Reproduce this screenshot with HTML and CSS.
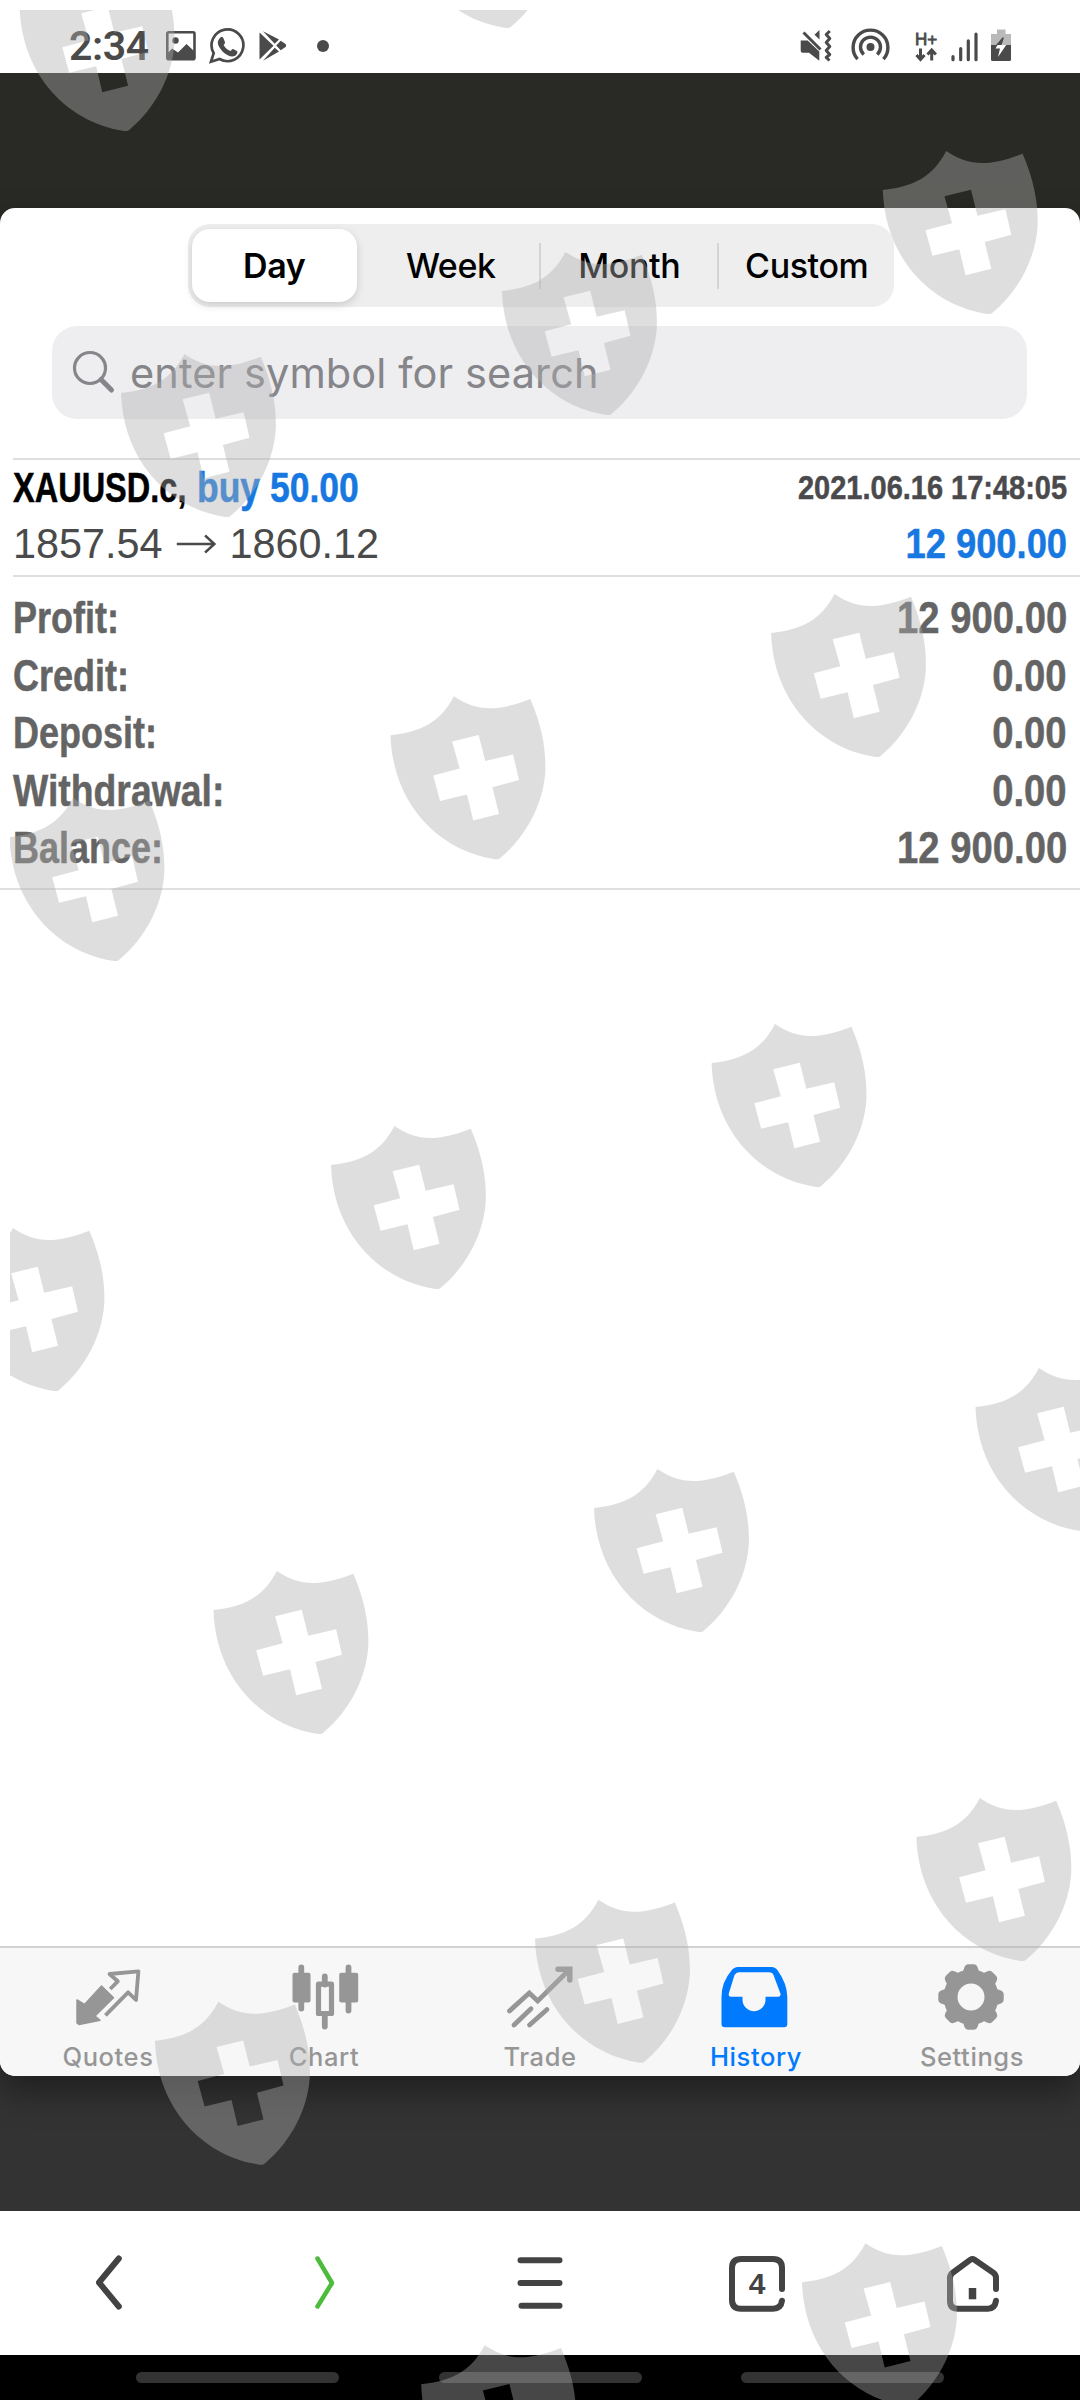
FILE: index.html
```
<!DOCTYPE html>
<html lang="en">
<head>
    <meta charset="UTF-8">
    <meta name="viewport" content="width=device-width, initial-scale=1.0">
    <title>History</title>
    <link rel="stylesheet" href="styles.css">
</head>
<body>
    <div class="screen">
        <header class="status-bar">
            <div class="status-left">
                <span class="clock">2:34</span>
                <svg class="st-image" width="30" height="40" viewBox="0 0 30 40">
                    <rect x="1.3" y="6.3" width="27.2" height="27" rx="1.5" fill="none" stroke="currentColor" stroke-width="2.6"/>
                    <circle cx="9.5" cy="14.5" r="3.2" fill="currentColor"/>
                    <path d="M1 28l5-5.500 6 4 8.500-8.500 8 7.500v8H1z" fill="currentColor"/>
                </svg>
                <svg class="st-whatsapp" width="37" height="40" viewBox="0 0 37 40">
                    <path d="M2 35.700l2.700-8.500A15.900 15.900 0 1 1 10.500 33z" fill="none" stroke="currentColor" stroke-width="2.700"/>
                    <path d="M10.500 12.500c1.500-2 3.400-1.700 4 0l1.500 3.700c.3 1-.9 2-1.400 2.800 1.600 3 3.900 4.800 6.900 6 .8-.8 1.600-2.300 2.600-2l3.800 1.900c1.400 1-.3 4.300-2.300 5.100-3.300 1.200-7.700-.6-11-3.600-3.300-3-6.800-8.500-5.500-11.500.2-.8.700-1.600 1.400-2.400z" fill="currentColor"/>
                </svg>
                <svg class="st-play" width="28" height="40" viewBox="0 0 28 40">
                    <path d="M.5 6.500L14.500 19.800.5 33.500zM4 5.300L20 13.500l-4.300 4.300zM21.700 14.700l4.500 3c1.300 1 1.300 2.600 0 3.600l-4.500 3-4.500-4.700zM4 34.700l11.700-13L20 25.600z" fill="currentColor"/>
                </svg>
                <span class="dot"></span>
            </div>
            <div class="status-right">
                <svg class="st-mute" width="32" height="40" viewBox="0 0 32 40">
                    <path d="M.7 14.500h7l11.600 11v9.300L9 26.700H2.700a2 2 0 0 1-2-2z" fill="currentColor"/>
                    <path d="M3.500 6.500l17 17" stroke="currentColor" stroke-width="3"/>
                    <path d="M19.500 4v9.500l-5-4.700z" fill="currentColor"/>
                    <path d="M29.800 5l-3.600 3.500 3.600 4-3.600 4 3.600 4-3.600 4 3.600 4-3.600 3 3.300 3" fill="none" stroke="currentColor" stroke-width="3" stroke-linejoin="round"/>
                </svg>
                <svg class="st-hotspot" width="39" height="40" viewBox="0 0 39 40">
                    <circle cx="19.500" cy="21" r="4" fill="currentColor"/>
                    <path d="M12.800 28.500a10 10 0 1 1 13.400 0M6.600 33.200a17.400 17.400 0 1 1 25.800 0" fill="none" stroke="currentColor" stroke-width="3.400"/>
                </svg>
                <svg class="st-data" width="23" height="40" viewBox="0 0 23 40">
                    <text class="data-text" x="0" y="18.500">H+</text>
                    <path d="M5.500 22.500v10M1.500 29l4 4.500 4-4.500M16.700 34.500v-10M12.500 28.500l4.200-4.500 4.200 4.500" fill="none" stroke="currentColor" stroke-width="3"/>
                </svg>
                <svg class="st-signal" width="29" height="40" viewBox="0 0 29 40">
                    <path d="M3 30.500v3.200M10.700 22.500v11.200M18.300 14.800v18.900M26 8v25.700" stroke="currentColor" stroke-width="3.200" stroke-linecap="round"/>
                </svg>
                <svg class="st-battery" width="22" height="40" viewBox="0 0 22 40">
                    <path d="M7 3.500h8.500V8H21v11H1V8h6z" fill="#b9b9b9"/>
                    <path d="M1 19h20v14.500a1.500 1.500 0 0 1-1.500 1.500h-17A1.500 1.500 0 0 1 1 33.500z" fill="currentColor"/>
                    <path d="M12.500 11.500l1.500 0-2.500 7.500h-5.500z" fill="currentColor"/>
                    <path d="M11.500 19h4.700L8 31l2-8.500H5.500L7.500 19z" fill="#fff"/>
                </svg>
            </div>
        </header>

        <main class="stage">
            <section class="card">
                <div class="segments">
                    <button class="segment active">Day</button>
                    <button class="segment">Week</button>
                    <button class="segment divided">Month</button>
                    <button class="segment divided">Custom</button>
                </div>

                <div class="search">
                    <svg width="44" height="46" viewBox="0 0 44 46" fill="none" stroke="currentColor">
                        <circle cx="18" cy="18" r="15.500" stroke-width="3.200"/>
                        <path d="M29 29.500L39.500 40" stroke-width="5" stroke-linecap="round"/>
                    </svg>
                    <span class="placeholder">enter symbol for search</span>
                </div>

                <div class="deal">
                    <div class="deal-row">
                        <div class="deal-title"><span class="symbol">XAUUSD.c,</span><span class="side">buy 50.00</span></div>
                        <span class="date">2021.06.16 17:48:05</span>
                    </div>
                    <div class="deal-row">
                        <div class="prices">
                            <span>1857.54</span>
                            <svg width="40" height="20" viewBox="0 0 40 20" fill="none" stroke="currentColor" stroke-width="2.500">
                                <path d="M0 10h38M29 1.500l9.500 8.500-9.500 8.500"/>
                            </svg>
                            <span>1860.12</span>
                        </div>
                        <span class="amount">12 900.00</span>
                    </div>
                </div>

                <div class="summary">
                    <div class="summary-row"><span class="label">Profit:</span><span class="value">12 900.00</span></div>
                    <div class="summary-row"><span class="label">Credit:</span><span class="value">0.00</span></div>
                    <div class="summary-row"><span class="label">Deposit:</span><span class="value">0.00</span></div>
                    <div class="summary-row"><span class="label wide">Withdrawal:</span><span class="value">0.00</span></div>
                    <div class="summary-row"><span class="label">Balance:</span><span class="value">12 900.00</span></div>
                </div>

                <nav class="tabs">
                    <div class="tab">
                        <svg width="72" height="76" viewBox="0 0 72 76">
                            <path d="M5 38l7.500 4.500 17-18.500 12 11.700L23 54l5 4.300L7 62.500l-2-1.500z" fill="currentColor" stroke="currentColor" stroke-width="1.500" stroke-linejoin="round"/>
                            <path d="M38.200 27l7.600-7.700L37.500 12l28.900-2.700L64 38l-7.900-7.700-22.700 23" fill="none" stroke="currentColor" stroke-width="3.800" stroke-linejoin="round"/>
                        </svg>
                        <span>Quotes</span>
                    </div>
                    <div class="tab">
                        <svg width="72" height="76" viewBox="0 0 72 76">
                            <path d="M13.300 5.500v41M36.800 14.500v8M36.800 52v12.500M60.500 5.500v43" stroke="currentColor" stroke-width="5.800" stroke-linecap="round"/>
                            <rect x="4.500" y="10.700" width="18" height="29.800" rx="2" fill="currentColor"/>
                            <rect x="51.200" y="10.700" width="19" height="29.800" rx="2" fill="currentColor"/>
                            <rect x="30.500" y="22.200" width="13" height="29.300" fill="none" stroke="currentColor" stroke-width="5.200" stroke-linejoin="round"/>
                        </svg>
                        <span>Chart</span>
                    </div>
                    <div class="tab">
                        <svg width="72" height="76" viewBox="0 0 72 76" fill="none" stroke="currentColor" stroke-width="4.800">
                            <path d="M5.500 49L25.300 31l8.400 8L65 8" stroke-linecap="round"/>
                            <path d="M54 7.200h11.800V18" stroke-width="5.500" stroke-linecap="round"/>
                            <path d="M10 63l17-16.300M25.500 63l17.500-15.500" stroke-linecap="round"/>
                        </svg>
                        <span>Trade</span>
                    </div>
                    <div class="tab active">
                        <svg width="72" height="76" viewBox="0 0 72 76">
                            <path fill-rule="evenodd" d="M18 5h33.500q4 0 6.200 3.500Q67.300 22 67.300 35v27q0 3.300-3.300 3.300H5q-3.500 0-3.500-3.300V35Q1.500 20 11.500 8.500 14 5 18 5zM19 10.300q-3 0-4.500 2.700L8.800 31.500q-.8 3.200 2.200 3.200h11.500v3a11.500 11.500 0 0 0 23 0v-3H58q3.300 0 2.400-3.200L53.500 13q-1-2.700-4.500-2.700z" fill="currentColor"/>
                        </svg>
                        <span>History</span>
                    </div>
                    <div class="tab">
                        <svg width="72" height="76" viewBox="0 0 72 76" fill="currentColor">
                            <defs>
                                <path id="tooth" d="M22 13q4.500-2 5.500-5l1-3q1-2.700 3.500-2.700h6q2.500 0 3.500 2.700l1 3q1 3 5.500 5z"/>
                            </defs>
                            <circle cx="35" cy="35" r="20.500" fill="none" stroke="currentColor" stroke-width="14"/>
                            <use href="#tooth"/>
                            <use href="#tooth" transform="rotate(45 35 35)"/>
                            <use href="#tooth" transform="rotate(90 35 35)"/>
                            <use href="#tooth" transform="rotate(135 35 35)"/>
                            <use href="#tooth" transform="rotate(180 35 35)"/>
                            <use href="#tooth" transform="rotate(225 35 35)"/>
                            <use href="#tooth" transform="rotate(270 35 35)"/>
                            <use href="#tooth" transform="rotate(315 35 35)"/>
                        </svg>
                        <span>Settings</span>
                    </div>
                </nav>
            </section>
        </main>

        <nav class="browser-bar">
            <svg width="72" height="72" viewBox="0 0 72 72"><path d="M46.800 11.500L27 35.500l19.800 24"/></svg>
            <svg class="forward" width="72" height="72" viewBox="0 0 72 72"><path d="M29.500 11.500L44 36 29.500 59.500"/></svg>
            <svg width="72" height="72" viewBox="0 0 72 72"><path d="M16.500 13.300h39M16.500 36h39M17.500 58.700h38"/></svg>
            <svg width="72" height="72" viewBox="0 0 72 72">
                <path d="M62 42V21q0-9-9-9H21q-9 0-9 9v31.700q0 9 9 9h32q8 0 9-8"/>
                <text class="count" x="37" y="46.500">4</text>
            </svg>
            <svg width="72" height="72" viewBox="0 0 72 72">
                <path d="M60 42V31q0-3.500-3-5.500L38.500 12.700q-2-1.300-4 0L17 25.500q-3 2-3 5.500v22.700q0 8 8 8h30q7 0 8-8"/>
                <path class="door" d="M36.500 41v11.300"/>
            </svg>
        </nav>

        <footer class="system-bar">
            <span></span>
            <span></span>
            <span></span>
        </footer>

        <svg class="watermark" width="1070" height="2390" viewBox="10 10 1070 2390">
            <defs>
                <path id="shield" fill-rule="evenodd" d="M0 0C30-3 50-13 63.400-39 85-25 103-22 139.800-36.300 152-8 155.500 15 154.800 36 153 68 136 101 110 122.500 108 124.500 106 124 103 123.700 48 115 2 68 0 0zM61.600 6.300l7.600 27-26.500 7 6.900 25.400 26.900-6.400 6.200 26 25.800-6.600-6.600-26.700 26.600-7.300-5.900-25.400-27.900 6.400-6.500-26z"/>
            </defs>
            <use href="#shield" x="19.600" y="7"/>
            <use href="#shield" x="401.200" y="-96"/>
            <use href="#shield" x="882.800" y="190"/>
            <use href="#shield" x="502" y="291"/>
            <use href="#shield" x="121" y="393"/>
            <use href="#shield" x="771.100" y="633"/>
            <use href="#shield" x="390.500" y="735.300"/>
            <use href="#shield" x="9.500" y="837"/>
            <use href="#shield" x="711.600" y="1063"/>
            <use href="#shield" x="331" y="1165"/>
            <use href="#shield" x="-50.500" y="1267"/>
            <use href="#shield" x="975.500" y="1407"/>
            <use href="#shield" x="594" y="1508"/>
            <use href="#shield" x="213.500" y="1610"/>
            <use href="#shield" x="916.400" y="1837"/>
            <use href="#shield" x="535" y="1938.700"/>
            <use href="#shield" x="155" y="2040.700"/>
            <use href="#shield" x="802" y="2282.300"/>
            <use href="#shield" x="421.200" y="2384.300"/>
        </svg>
    </div>
</body>
</html>
```
FILE: styles.css
```
* {
    box-sizing: border-box;
}
body {
    margin: 0;
    background: #fff;
    font-family: Inter, "Liberation Sans", sans-serif;
}
svg {
    display: block;
    flex: none;
}
.screen {
    position: relative;
    width: 1080px;
    height: 2400px;
    display: flex;
    flex-direction: column;
    overflow: hidden;
}

/* status bar */
.status-bar {
    height: 73px;
    padding: 19px 68px 0 69px;
    display: flex;
    justify-content: space-between;
    color: #4a4a4a;
}
.status-left,
.status-right {
    height: 54px;
    display: flex;
    align-items: center;
}
.clock {
    width: 97px;
    font-family: Roboto, sans-serif;
    font-size: 41px;
    font-weight: 600;
    letter-spacing: -0.4px;
    line-height: 54px;
}
.st-whatsapp,
.st-play {
    margin-left: 13px;
}
.dot {
    width: 12px;
    height: 12px;
    margin-left: 30px;
    border-radius: 50%;
    background: currentColor;
}
.st-hotspot {
    margin-left: 19px;
}
.st-data {
    margin-left: 25px;
}
.st-signal {
    margin-left: 12px;
}
.st-battery {
    margin-left: 11px;
}
.data-text {
    font: 500 17px "Liberation Sans", sans-serif;
    fill: #4a4a4a;
    stroke: #4a4a4a;
    stroke-width: 0.8px;
}

/* dark backdrop with the app card */
.stage {
    height: 2138px;
    padding: 135px 0;
    overflow: hidden;
    background: linear-gradient(#292925 50%, #333 50%);
}
.card {
    height: 1868px;
    display: flex;
    flex-direction: column;
    border-radius: 15px;
    background: #fff;
    overflow: hidden;
    box-shadow: 0 16px 34px rgba(0, 0, 0, 0.4);
}
.segments {
    width: 706px;
    height: 83px;
    margin: 16px 0 0 188px;
    padding: 5px 0 5px 4px;
    display: flex;
    flex: none;
    border-radius: 22px;
    background: #eee;
}
.segment {
    width: 178px;
    padding: 0 0 0 3px;
    border: 0;
    background: none;
    color: #000;
    font-family: Inter, sans-serif;
    font-size: 34px;
    font-weight: 450;
    letter-spacing: -0.4px;
    line-height: 73px;
}
.segment:nth-child(2) {
    width: 183px;
    padding-left: 6px;
}
.segment.active {
    width: 165px;
    padding-left: 0;
    border-radius: 18px;
    background: #fff;
    font-weight: 600;
    box-shadow: 0 3px 8px rgba(0, 0, 0, 0.15);
}
.segment.divided {
    background: linear-gradient(#d4d4d4, #d4d4d4) left center / 2px 46px no-repeat;
}
.search {
    width: 975px;
    height: 93px;
    margin: 19px 0 0 52px;
    padding-left: 20px;
    display: flex;
    flex: none;
    align-items: center;
    border-radius: 25px;
    background: #eeeef0;
    color: #85858a;
}
.placeholder {
    margin-left: 14px;
    font-size: 41.500px;
    letter-spacing: 0.1px;
    line-height: 50px;
}

/* deal list, condensed lettering */
.deal {
    margin: 39px 0 0 13px;
    height: 119px;
    flex: none;
    border-top: 2px solid #dedede;
    border-bottom: 2px solid #dedede;
    font-family: "Liberation Sans", sans-serif;
    font-size: 42.500px;
    font-weight: bold;
}
.deal-row {
    height: 56px;
    padding-right: 13px;
    display: flex;
    justify-content: space-between;
    line-height: 56px;
    white-space: nowrap;
}
.deal-title,
.date,
.amount,
.summary {
    -webkit-text-stroke: 0.5px;
}
.deal-title {
    display: flex;
}
.symbol {
    width: 184px;
    transform: scaleX(0.765);
    transform-origin: left;
    color: #000;
}
.side {
    transform: scaleX(0.835);
    transform-origin: left;
    color: #1678e0;
}
.date {
    transform: scaleX(0.865);
    transform-origin: right;
    font-size: 33.500px;
    color: #4a4a4c;
}
.prices {
    display: flex;
    align-items: center;
    color: #4a4a4a;
    font-size: 42px;
    font-weight: normal;
    transform: scaleX(0.985);
    transform-origin: left;
}
.prices svg {
    margin: 0 14px;
}
.amount {
    transform: scaleX(0.855);
    transform-origin: right;
    color: #1678e0;
}
.summary {
    height: 313px;
    flex: none;
    padding: 12px 13px 0;
    border-bottom: 2px solid #e0e0e0;
    font-family: "Liberation Sans", sans-serif;
    font-size: 45px;
    font-weight: bold;
    color: #646464;
}
.summary-row {
    height: 57.500px;
    display: flex;
    justify-content: space-between;
    line-height: 57px;
}
.label {
    transform: scaleX(0.8);
    transform-origin: left;
}
.label.wide {
    transform: scaleX(0.83);
}
.value {
    transform: scaleX(0.85);
    transform-origin: right;
}

/* tab bar */
.tabs {
    height: 130px;
    margin-top: auto;
    flex: none;
    display: flex;
    border-top: 2px solid #d2d2d2;
    background: #f7f7f7;
}
.tab {
    width: 216px;
    padding-top: 14px;
    display: flex;
    flex-direction: column;
    align-items: center;
    color: #969696;
    font-size: 25.500px;
    font-weight: 500;
    letter-spacing: 0.6px;
    line-height: 37px;
}
.tab.active {
    color: #007aff;
}

/* browser and system navigation */
.browser-bar {
    height: 144px;
    display: flex;
    justify-content: space-around;
    align-items: center;
    background: #fff;
}
.browser-bar path {
    fill: none;
    stroke: #434343;
    stroke-width: 6;
    stroke-linecap: round;
    stroke-linejoin: round;
}
.browser-bar .forward path {
    stroke: #4dbb3c;
    stroke-width: 4.5;
}
.browser-bar .door {
    stroke-width: 7.5;
    stroke-linecap: butt;
}
.count {
    font: bold 30px "Liberation Sans", sans-serif;
    text-anchor: middle;
    fill: #434343;
}
.system-bar {
    height: 45px;
    padding: 17px 0 0 136px;
    display: flex;
    gap: 99.500px;
    background: #000;
}
.system-bar span {
    width: 203px;
    height: 11px;
    border-radius: 6px;
    background: #333;
}

.watermark {
    position: absolute;
    left: 10px;
    top: 10px;
    fill: #b0b0b0;
    opacity: 0.404;
}
```
